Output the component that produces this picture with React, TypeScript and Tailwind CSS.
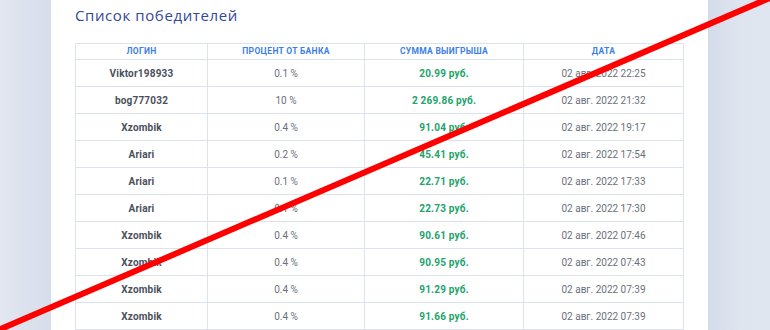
const winners = [
  { login: "Viktor198933", pct: "0.1 %", sum: "20.99 руб.", date: "02 авг. 2022 22:25" },
  { login: "bog777032", pct: "10 %", sum: "2 269.86 руб.", date: "02 авг. 2022 21:32" },
  { login: "Xzombik", pct: "0.4 %", sum: "91.04 руб.", date: "02 авг. 2022 19:17" },
  { login: "Ariari", pct: "0.2 %", sum: "45.41 руб.", date: "02 авг. 2022 17:54" },
  { login: "Ariari", pct: "0.1 %", sum: "22.71 руб.", date: "02 авг. 2022 17:33" },
  { login: "Ariari", pct: "0.1 %", sum: "22.73 руб.", date: "02 авг. 2022 17:30" },
  { login: "Xzombik", pct: "0.4 %", sum: "90.61 руб.", date: "02 авг. 2022 07:46" },
  { login: "Xzombik", pct: "0.4 %", sum: "90.95 руб.", date: "02 авг. 2022 07:43" },
  { login: "Xzombik", pct: "0.4 %", sum: "91.29 руб.", date: "02 авг. 2022 07:39" },
  { login: "Xzombik", pct: "0.4 %", sum: "91.66 руб.", date: "02 авг. 2022 07:39" },
];

export default function App() {
  return (
    <div className="relative h-[330px] w-[770px] overflow-hidden flex bg-[#dfe5ef] font-['Roboto',sans-serif]">
      {/* left gutter */}
      <div className="w-[51px] shrink-0 bg-gradient-to-r from-[#e2e7f0] to-[#d6ddea]" />

      {/* panel */}
      <div className="w-[657px] shrink-0 bg-white px-6 pt-[3px]">
        <h2 className="text-[15px] leading-[24px] tracking-[0.6px] text-[#34489a] font-['Open_Sans',sans-serif]">
          Список победителей
        </h2>

        <table className="mt-[16px] w-[608px] border-collapse table-fixed">
          <colgroup>
            <col className="w-[132px]" />
            <col className="w-[157px]" />
            <col className="w-[159px]" />
            <col className="w-[160px]" />
          </colgroup>
          <thead>
            <tr className="h-[16px]">
              {["Логин", "Процент от банка", "Сумма выигрыша", "Дата"].map((h) => (
                <th
                  key={h}
                  className="border border-[#dde3ec] p-0 text-center text-[8.5px] font-bold uppercase tracking-[0.3px] text-[#3d7fe6]"
                >
                  {h}
                </th>
              ))}
            </tr>
          </thead>
          <tbody>
            {winners.map((w, i) => (
              <tr key={i} className="h-[27px]">
                <td className="border border-[#dde3ec] p-0 text-center text-[10px] font-bold tracking-[0.2px] text-[#4b505c]">
                  {w.login}
                </td>
                <td className="border border-[#dde3ec] p-0 text-center text-[10px] text-[#6b707a]">{w.pct}</td>
                <td className="border border-[#dde3ec] p-0 text-center text-[10px] font-bold tracking-[0.2px] text-[#23a36b]">
                  {w.sum}
                </td>
                <td className="border border-[#dde3ec] p-0 text-center text-[10px] text-[#6b707a]">{w.date}</td>
              </tr>
            ))}
          </tbody>
        </table>
      </div>

      {/* right gutter */}
      <div className="flex-1 bg-gradient-to-r from-[#d4dbe9] via-[#dfe5ef] to-[#e0e6f0]" />

      {/* red strike-through line over the screenshot */}
      <svg className="pointer-events-none absolute inset-0" width="770" height="330" viewBox="0 0 770 330">
        <line x1="-4" y1="331" x2="772" y2="-3" stroke="#ff0000" strokeWidth="6" />
      </svg>
    </div>
  );
}
